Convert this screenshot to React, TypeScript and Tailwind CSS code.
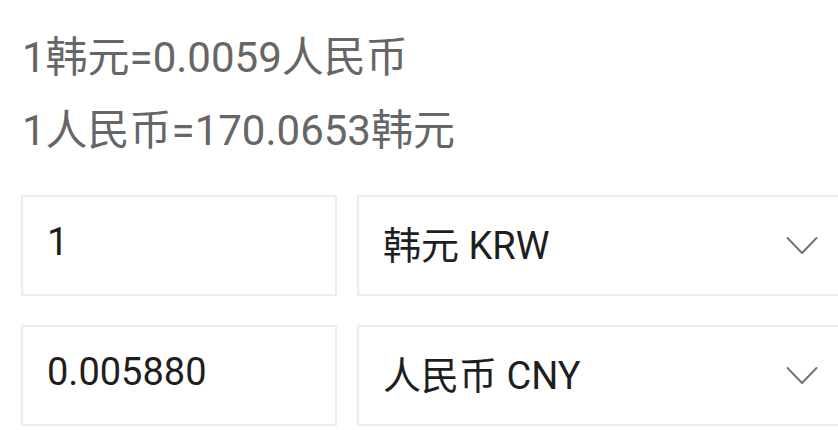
import React from 'react';

const FONT = '[font-family:Roboto,"Noto_Sans_CJK_SC",sans-serif]';

function Chevron() {
  return (
    <svg width="32" height="20" viewBox="0 0 32 20" fill="none" className="shrink-0">
      <path d="M1.5 2L16 17L30.5 2" stroke="#6f6f6f" strokeWidth="1.8" strokeLinecap="round" strokeLinejoin="round" />
    </svg>
  );
}

function Row({ amount, currency }: { amount: string; currency: string }) {
  return (
    <div className="flex gap-[20px]">
      <div className="flex h-[101px] w-[316px] shrink-0 items-center border-2 border-[#ececec] pb-[8px] pl-[24px]">
        <span className="text-[38px] leading-none text-[#1e1e1e]">{amount}</span>
      </div>
      <div className="flex h-[101px] w-[490px] shrink-0 items-center justify-between border-2 border-[#ececec] pl-[24px] pr-[27px]">
        <span className="text-[38px] leading-none text-[#1e1e1e]">{currency}</span>
        <Chevron />
      </div>
    </div>
  );
}

export default function App() {
  return (
    <div className={`h-[430px] w-[838px] overflow-hidden bg-white ${FONT}`}>
      <div className="pl-[22px] pt-[21px] text-[42px] leading-[73px] text-[#666666]">
        <div>1韩元=0.0059人民币</div>
        <div>1人民币=170.0653韩元</div>
      </div>
      <div className="mt-[28px] flex flex-col gap-[29px] pl-[21px]">
        <Row amount="1" currency="韩元 KRW" />
        <Row amount="0.005880" currency="人民币 CNY" />
      </div>
    </div>
  );
}
